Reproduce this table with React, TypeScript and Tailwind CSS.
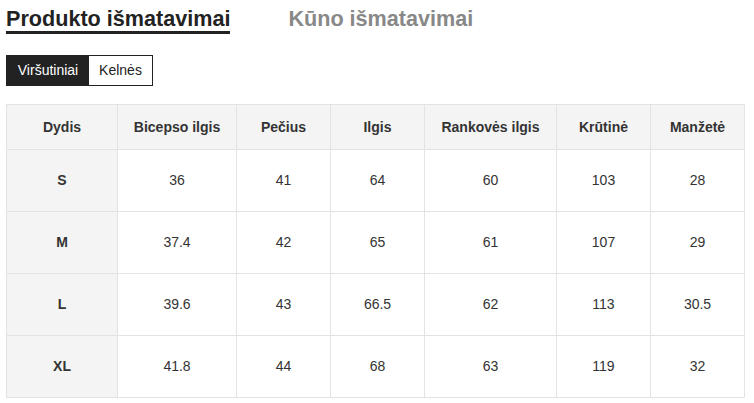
import React from "react";

const headers = ["Dydis", "Bicepso ilgis", "Pečius", "Ilgis", "Rankovės ilgis", "Krūtinė", "Manžetė"];
const widths = ["w-[111px]", "w-[119px]", "w-[94px]", "w-[94px]", "w-[132px]", "w-[94px]", "w-[94px]"];

const rows: string[][] = [
  ["S", "36", "41", "64", "60", "103", "28"],
  ["M", "37.4", "42", "65", "61", "107", "29"],
  ["L", "39.6", "43", "66.5", "62", "113", "30.5"],
  ["XL", "41.8", "44", "68", "63", "119", "32"],
];

export default function App() {
  return (
    <div className="w-[754px] h-[403px] bg-white px-[6px] pt-[7px] font-['Liberation_Sans',Arial,sans-serif] text-[#333]">
      {/* Tabs */}
      <div className="flex items-start gap-[58px]">
        <div className="text-[21.6px] font-bold text-[#222] leading-[24px] border-b-[3px] border-[#222]">
          Produkto išmatavimai
        </div>
        <div className="text-[21.6px] font-bold text-[#888] leading-[24px]">Kūno išmatavimai</div>
      </div>

      {/* Category toggle */}
      <div className="flex mt-[21px] h-[31px] w-fit border border-[#222] text-[14px]">
        <button className="w-[82px] bg-[#222] text-white">Viršutiniai</button>
        <button className="w-[63px] bg-white text-[#222]">Kelnės</button>
      </div>

      {/* Size table */}
      <table className="mt-[18px] w-[738px] table-fixed border-collapse text-[14px]">
        <thead>
          <tr className="h-[45px] bg-[#f4f4f4]">
            {headers.map((h, i) => (
              <th key={h} className={`${widths[i]} border border-[#e3e3e3] font-bold text-center text-[#333]`}>
                {h}
              </th>
            ))}
          </tr>
        </thead>
        <tbody>
          {rows.map((r) => (
            <tr key={r[0]} className="h-[62px]">
              {r.map((c, i) => (
                <td
                  key={i}
                  className={
                    i === 0
                      ? "border border-[#e3e3e3] bg-[#f4f4f4] font-bold text-center"
                      : "border border-[#e3e3e3] text-center"
                  }
                >
                  {c}
                </td>
              ))}
            </tr>
          ))}
        </tbody>
      </table>
    </div>
  );
}
